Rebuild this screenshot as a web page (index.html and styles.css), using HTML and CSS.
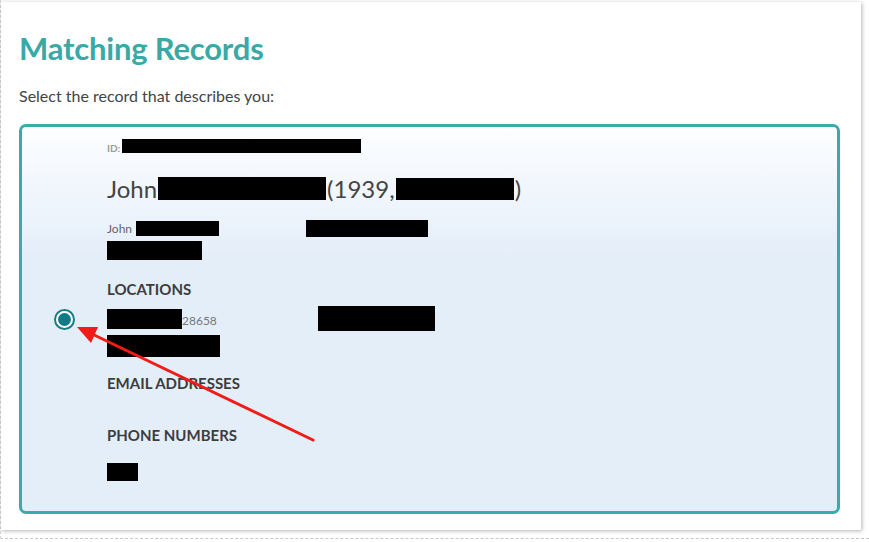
FILE: index.html
```html
<!DOCTYPE html>
<html lang="en">
<head>
<meta charset="UTF-8" />
<meta name="viewport" content="width=device-width, initial-scale=1.0"/>
<title>Matching Records</title>
<link rel="stylesheet" href="styles.css">
</head>
<body>

<div class="frame">
  <div class="panel">
    <h1>Matching Records</h1>
    <p class="hint">Select the record that describes you:</p>

    <div class="record">
      <div class="pick">
        <span class="radio"><span class="dot"></span></span>
      </div>
      <div class="info">
        <div class="id-row">
          <span class="id-label">ID:</span>
          <span class="redact" style="width: 239px; height: 14px;"></span>
        </div>

        <div class="name-row">
          <span>John</span><span class="redact" style="width: 168px; height: 23px;"></span><span>(1939,</span><span class="redact" style="width: 118px; height: 22px;"></span><span>)</span>
        </div>

        <div class="alias-row">
          <span class="small">John</span>
          <span class="redact" style="width: 83px; height: 15px;"></span>
          <span class="redact gap" style="width: 122px; height: 17px;"></span>
        </div>
        <div class="line">
          <span class="redact" style="width: 95px; height: 19px;"></span>
        </div>

        <h3>LOCATIONS</h3>
        <div class="loc-row">
          <span class="redact" style="width: 75px; height: 20px;"></span><span class="small">28658</span>
          <span class="redact far" style="width: 117px; height: 25px;"></span>
        </div>
        <div class="line">
          <span class="redact" style="width: 113px; height: 22px;"></span>
        </div>

        <h3 class="email">EMAIL ADDRESSES</h3>

        <h3 class="phone">PHONE NUMBERS</h3>
        <div class="line">
          <span class="redact" style="width: 31px; height: 18px;"></span>
        </div>
      </div>
    </div>
  </div>
</div>

<!-- стрелка поверх карточки -->
<svg class="arrow" width="869" height="542" viewBox="0 0 869 542">
  <line x1="313" y1="440" x2="90" y2="333" stroke="#f21c16" stroke-width="3" stroke-linecap="round"/>
  <polygon points="77,327 98,327 91,343" fill="#f21c16"/>
</svg>

</body>
</html>
```

FILE: styles.css
```css
body {
  margin: 0;
  padding: 0;
  font-family: Lato, "Open Sans", sans-serif;
  background: #fff;
}

/* внешняя рамка с пунктиром */
.frame {
  border-left: 1px dashed #d4d4d4;
  border-bottom: 1px dashed #c8c8c8;
  padding-top: 2px;
  padding-bottom: 8px;
  width: 868px;
}

.panel {
  width: 842px;
  height: 528px;
  padding: 0 0 0 18px;
  background: #fff;
  box-shadow: 1px 1px 4px rgba(0, 0, 0, 0.3);
  box-sizing: content-box;
}

h1 {
  margin: 0;
  padding-top: 28px;
  font-size: 31px;
  line-height: 36px;
  color: #3aa9a6;
  font-weight: 700;
  letter-spacing: -0.2px;
}

.hint {
  margin: 20px 0 0;
  font-size: 16px;
  line-height: 20px;
  color: #444;
}

/* карточка записи */
.record {
  margin-top: 18px;
  width: 815px;
  height: 384px;
  border: 3px solid #37aca9;
  border-radius: 7px;
  background: linear-gradient(#fdfeff 0, #e4eef9 130px, #e4eef9 100%);
  display: flex;
  align-items: center;
}

.pick {
  width: 85px;
  display: flex;
  justify-content: center;
}

.radio {
  width: 21px;
  height: 21px;
  border: 2px solid #177d88;
  border-radius: 50%;
  box-sizing: border-box;
  display: flex;
  align-items: center;
  justify-content: center;
  background: #fff;
}

.dot {
  width: 13px;
  height: 13px;
  border-radius: 50%;
  background: #117a86;
}

.info {
  align-self: flex-start;
  padding-top: 12px;
  color: #444;
}

.redact {
  display: inline-block;
  background: #000;
  vertical-align: bottom;
}

.id-row {
  display: flex;
  align-items: flex-end;
  height: 14px;
}

.id-label {
  font-size: 10px;
  font-weight: 700;
  color: #9a9a9a;
  line-height: 10px;
  margin-right: 2px;
}

.name-row {
  margin-top: 24px;
  display: flex;
  align-items: center;
  font-size: 24px;
  line-height: 23px;
  color: #444;
}

.name-row .redact {
  margin: 0 1px;
}

.alias-row {
  margin-top: 20px;
  display: flex;
  align-items: center;
  height: 17px;
}

.small {
  font-size: 12px;
  color: #666;
}

.alias-row .redact {
  margin-left: 4px;
}

.alias-row .gap {
  margin-left: 87px;
}

.line {
  display: flex;
  margin-top: 4px;
}

h3 {
  margin: 0;
  font-size: 15px;
  line-height: 18px;
  font-weight: 700;
  color: #3d3d3d;
}

.info h3:first-of-type {
  margin-top: 20px;
}

.loc-row {
  margin-top: 8px;
  display: flex;
  align-items: center;
  height: 25px;
}

.loc-row .small {
  margin-top: 4px;
  color: #777;
}

.loc-row .far {
  margin-left: 101px;
}

.email {
  margin-top: 17px !important;
}

.phone {
  margin-top: 34px !important;
}

.phone + .line {
  margin-top: 19px;
}

.arrow {
  position: absolute;
  top: 0;
  left: 0;
  pointer-events: none;
}
```
